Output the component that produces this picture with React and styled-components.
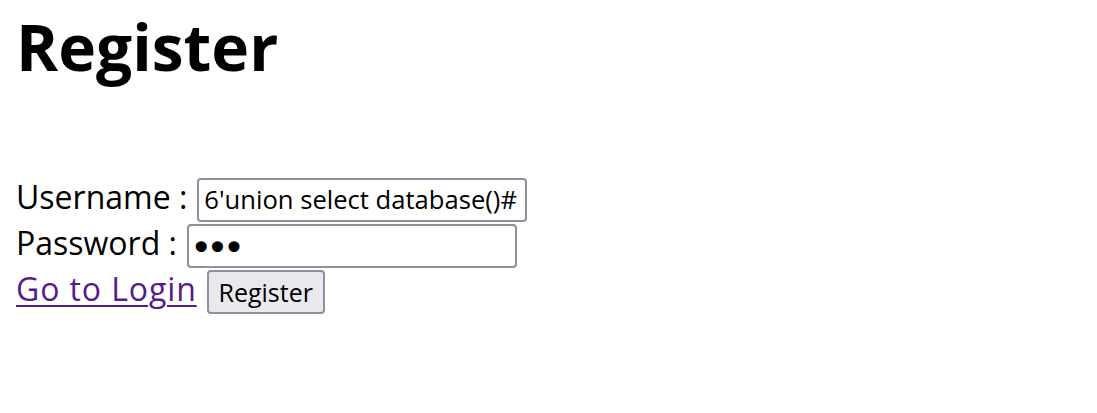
import React from "react";
import styled, { createGlobalStyle } from "styled-components";

const GlobalStyle = createGlobalStyle`
  html, body {
    margin: 0;
    padding: 0;
    background: #ffffff;
  }
  body {
    font-family: "Open Sans", "Lato", sans-serif;
    color: #000000;
  }
`;

const Page = styled.main`
  padding: 9px 16px 0;
`;

const Title = styled.h1`
  margin: 0;
  font-size: 64px;
  font-weight: 700;
  line-height: 1.2;
`;

const Form = styled.form`
  margin-top: 92px;
  display: flex;
  flex-direction: column;
  gap: 2px;
`;

const Row = styled.div`
  display: flex;
  align-items: center;
  height: 44px;
  gap: 10px;
`;

const Label = styled.label`
  font-size: 32px;
  line-height: 1.2;
  margin-bottom: 6px;
`;

const Field = styled.input`
  box-sizing: border-box;
  width: 330px;
  height: 44px;
  margin: 0;
  padding: 0 5px;
  border: 2px solid #8f8f9d;
  border-radius: 4px;
  background: #ffffff;
  color: #000000;
  font-family: "Open Sans", sans-serif;
  font-size: 25.6px;
  outline: none;
`;

const PasswordField = styled(Field)`
  font-family: "DejaVu Sans", sans-serif;
  font-size: 38px;
  letter-spacing: -6px;
  padding: 4px 0 0 1px;
`;

const LoginLink = styled.a`
  font-size: 32px;
  line-height: 1.2;
  letter-spacing: 0.9px;
  color: #551a8b;
  text-decoration: underline;
  text-decoration-thickness: 2px;
  text-underline-offset: 4px;
  margin-bottom: 6px;
`;

const Button = styled.button`
  box-sizing: border-box;
  width: 118px;
  height: 44px;
  margin: 0;
  padding: 0;
  border: 2px solid #8f8f9d;
  border-radius: 4px;
  background: #e9e9ed;
  color: #000000;
  font-family: "Open Sans", sans-serif;
  font-size: 25px;
`;

export default function App() {
  return (
    <>
      <GlobalStyle />
      <Page>
        <Title>Register</Title>
        <Form onSubmit={(e) => e.preventDefault()}>
          <Row>
            <Label htmlFor="username">Username :</Label>
            <Field id="username" type="text" defaultValue="6'union select database()#" />
          </Row>
          <Row>
            <Label htmlFor="password">Password :</Label>
            <PasswordField id="password" type="password" defaultValue="123" />
          </Row>
          <Row>
            <LoginLink href="#login">Go to Login</LoginLink>
            <Button type="submit">Register</Button>
          </Row>
        </Form>
      </Page>
    </>
  );
}
